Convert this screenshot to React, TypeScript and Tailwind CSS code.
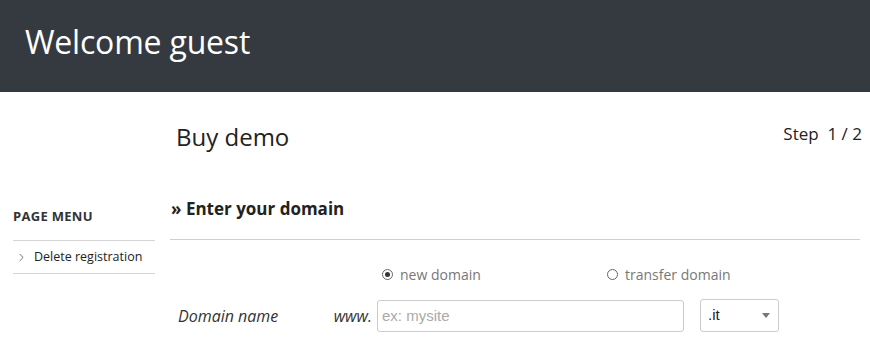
import { ChevronRight } from 'lucide-react';

const font = { fontFamily: '"Open Sans", "Noto Sans", sans-serif' };
const arial = { fontFamily: '"Liberation Sans", Arial, sans-serif' };

function SideMenu() {
  return (
    <aside className="w-[155px] shrink-0 pl-[13px] pt-[114px]">
      <h3 className="text-[13px] font-bold uppercase tracking-[0.3px] text-[#333] leading-[20px]">Page menu</h3>
      <ul className="mt-[14px] border-t border-[#d5d5d5]">
        <li className="flex h-[33px] items-center gap-[6px] border-b border-[#d5d5d5] pl-[2px] text-[12.5px] text-[#222]">
          <ChevronRight className="h-[13px] w-[13px] text-[#555]" strokeWidth={1.5} />
          <span>Delete registration</span>
        </li>
      </ul>
    </aside>
  );
}

function Radio({ checked, label }: { checked?: boolean; label: string }) {
  return (
    <label className="flex items-center gap-[7px] text-[14px] text-[#777]">
      <span className="flex h-[11px] w-[11px] items-center justify-center rounded-full border border-[#666]">
        {checked && <span className="h-[5px] w-[5px] rounded-full bg-[#333]" />}
      </span>
      {label}
    </label>
  );
}

export default function App() {
  return (
    <div className="w-[870px] h-[354px] overflow-hidden bg-white" style={font}>
      <header className="flex h-[92px] items-center bg-[#343a40] px-[25px] pb-[9px]">
        <h1 className="text-[32px] font-normal text-white tracking-[-0.2px]">Welcome guest</h1>
      </header>

      <div className="flex">
        <SideMenu />
        <main className="flex-1 pl-[15px] pr-[8px]">
          <div className="flex items-start justify-between pt-[27px]">
            <h2 className="pl-[6px] text-[24px] leading-[36px] text-[#222]">Buy demo</h2>
            <div className="pt-[2px] text-[17px] text-[#222]">Step&nbsp; 1 / 2</div>
          </div>

          <h3 className="mt-[42px] pl-[1px] text-[17px] font-bold leading-[24px] text-[#222]">» Enter your domain</h3>
          <div className="mt-[18px] mr-[2px] border-t border-[#cfcfcf]" />

          <div className="mt-[24px] flex pl-[212px]">
            <div className="w-[225px]">
              <Radio checked label="new domain" />
            </div>
            <Radio label="transfer domain" />
          </div>

          <div className="mt-[14px] flex items-center">
            <span className="w-[151px] pl-[8px] text-[16px] italic text-[#333]">Domain name</span>
            <span className="w-[56px] pr-[5px] text-right text-[16px] italic text-[#333]">www.</span>
            <input
              className="h-[32px] w-[307px] rounded-[3px] border border-[#ccc] px-[4px] text-[15px] text-[#333] placeholder:text-[#aaa] outline-none"
              style={arial}
              placeholder="ex: mysite"
            />
            <div
              className="ml-[16px] flex h-[33px] w-[79px] items-center justify-between rounded-[3px] border border-[#ccc] pl-[7px] pr-[8px] text-[15px] text-[#222]"
              style={arial}
            >
              <span>.it</span>
              <span className="h-0 w-0 border-x-[4px] border-t-[5px] border-x-transparent border-t-[#777]" />
            </div>
          </div>
        </main>
      </div>
    </div>
  );
}
